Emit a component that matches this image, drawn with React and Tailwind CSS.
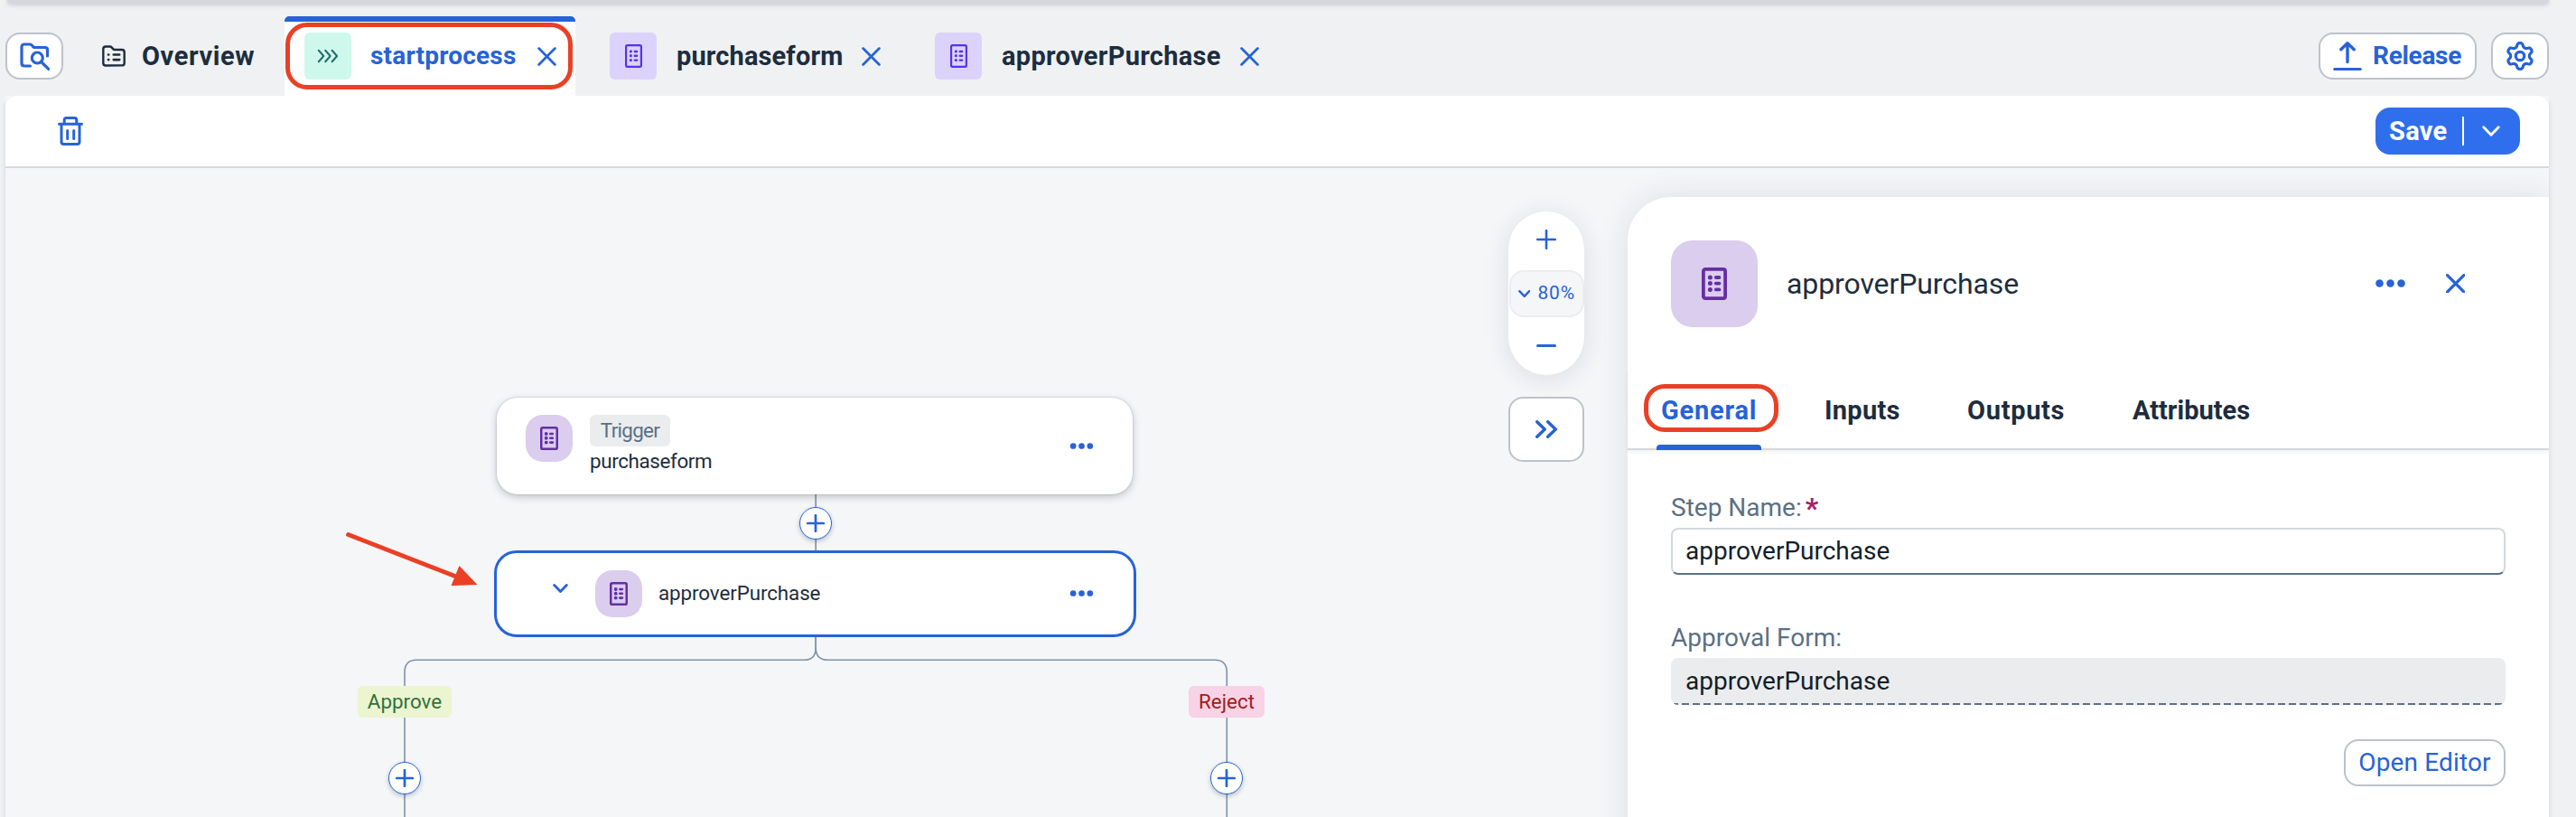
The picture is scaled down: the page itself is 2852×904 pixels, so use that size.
const GEAR_PATH = (() => {
  const points = [];
  for (let i = 0; i < 120; i++) {
    const a = (i / 120) * Math.PI * 2;
    const lobe = Math.tanh(1.6 * Math.cos(6 * a)) / Math.tanh(1.6);
    const r = 12.4 + 2 * lobe;
    points.push(`${(16 + r * Math.sin(a)).toFixed(2)} ${(16 - r * Math.cos(a)).toFixed(2)}`);
  }
  return `M${points.join("L")}Z`;
})();

function FormIcon({ className, stroke = 3.8, dot = 2.5, dash = 3.8 }) {
  return (
    <svg viewBox="0 0 28 36" preserveAspectRatio="none" className={className} fill="none" stroke="currentColor">
      <rect x={stroke / 2} y={stroke / 2} width={28 - stroke} height={36 - stroke} rx="2.2" strokeWidth={stroke} />
      {[11, 17.6, 24.4].map((y) => (
        <g key={y}>
          <circle cx="9.4" cy={y} r={dot} fill="currentColor" stroke="none" />
          <path d={`M15.8 ${y}h3.6`} strokeWidth={dash} strokeLinecap="round" />
        </g>
      ))}
    </svg>
  );
}

function CloseIcon({ className, width = 2.6 }) {
  return (
    <svg viewBox="0 0 20 20" className={className} fill="none" stroke="#2763d6" strokeWidth={width} strokeLinecap="round">
      <path d="M1.5 1.5l17 17M18.5 1.5l-17 17" />
    </svg>
  );
}

function FolderSearchIcon() {
  return (
    <svg viewBox="0 0 34 32" className="h-8 w-[34px]" fill="none" stroke="#2763d6" strokeWidth="3.2" strokeLinecap="round" strokeLinejoin="round">
      <path d="M12.5 27H6q-3 0-3-3V6q0-3 3-3h6q1.500 0 2.500 1.300l1.200 1.400Q16.600 6.500 18 6.500h11q2.500 0 2.500 2.500v7" />
      <circle cx="20.300" cy="18" r="6" />
      <path d="M24.700 22.500l8 7.800" />
    </svg>
  );
}

function OverviewIcon() {
  return (
    <svg viewBox="0 0 26 24" className="h-6 w-[26px]" fill="none" stroke="#1d2d3e" strokeWidth="2.4" strokeLinecap="round" strokeLinejoin="round">
      <path d="M4 22.500q-2.700 0-2.700-2.700V4.200q0-2.700 2.700-2.700h4.600q1.200 0 2 .9l1.500 1.700q.8.9 2 .9H22q2.700 0 2.700 2.700v12q0 2.700-2.700 2.700z" />
      <path d="M7 10.500h.2M12.800 10.500h6.400M7 16.100h.2M12.800 16.100h6.400" strokeWidth="2.700" />
    </svg>
  );
}

function ProcessIcon() {
  return (
    <svg viewBox="0 0 24 16" className="h-4 w-6" fill="none" stroke="#256f6f" strokeWidth="2.100" strokeLinecap="round" strokeLinejoin="round">
      <path d="M1.800 1.800L7.300 8l-5.500 6.200M9.200 1.800L14.700 8l-5.500 6.200M16.600 1.800L22.100 8l-5.500 6.200" />
    </svg>
  );
}

function TrashIcon() {
  return (
    <svg viewBox="0 0 28 32" className="h-8 w-7" fill="none" stroke="#2763d6" strokeWidth="3" strokeLinecap="round" strokeLinejoin="round">
      <path d="M1.500 8.200h25M7.200 8V4q0-2.400 2.400-2.400h8.800q2.400 0 2.400 2.400v4M4 8.200V28q0 2.500 2.500 2.500h15q2.500 0 2.500-2.500V8.200M10.700 15.500v9M17.700 15.500v9" />
    </svg>
  );
}

function ReleaseIcon() {
  return (
    <svg viewBox="0 0 32 32" className="h-8 w-8" fill="none" stroke="#2763d6" strokeLinecap="round" strokeLinejoin="round">
      <path d="M16 22.500V2.200M8.800 8.800L16 1.800l7.200 7" strokeWidth="3.400" />
      <path d="M1.700 30.400h28.600" strokeWidth="3" />
    </svg>
  );
}

function DotsIcon({ className }) {
  return (
    <svg viewBox="0 0 33 9" className={className} fill="#2763d6">
      <circle cx="4.500" cy="4.500" r="4.300" />
      <circle cx="16.500" cy="4.500" r="4.300" />
      <circle cx="28.500" cy="4.500" r="4.300" />
    </svg>
  );
}

function Chevron({ className, color = "#2763d6", width = 3 }) {
  return (
    <svg viewBox="0 0 20 12" className={className} fill="none" stroke={color} strokeWidth={width} strokeLinecap="round" strokeLinejoin="round">
      <path d="M1.800 1.800L10 10.200l8.200-8.400" />
    </svg>
  );
}

function FormTab({ label, width, textClass }) {
  return (
    <div className={`flex h-full items-center pl-[38px] pr-[22px] ${width}`}>
      <div className="flex size-[52px] items-center justify-center rounded-md bg-[#dcd3fc] text-[#5332f0]">
        <FormIcon className="h-[26px] w-[19px]" stroke={3.2} dot={2.2} dash={3.4} />
      </div>
      <span className={`ml-[22px] whitespace-nowrap text-[29px] font-bold leading-8 ${textClass}`}>{label}</span>
      <CloseIcon className="ml-auto size-[21px]" />
    </div>
  );
}

function StepIcon({ className = "" }) {
  return (
    <div className={`flex size-[52px] shrink-0 items-center justify-center rounded-[19px] bg-[#dbcdee] text-[#652fa3] ${className}`}>
      <FormIcon className="h-[26px] w-5" stroke={3.5} dot={2.7} dash={3.6} />
    </div>
  );
}

function AddStep({ className }) {
  return (
    <div className={`absolute flex size-9 items-center justify-center rounded-full border-[1.5px] border-[#2763d6] bg-white shadow-[0_2px_5px_rgba(34,53,72,0.28)] ${className}`}>
      <svg viewBox="0 0 20 20" className="size-5" stroke="#2763d6" strokeWidth="2.700" strokeLinecap="round">
        <path d="M10 1.200v17.600M1.200 10h17.600" />
      </svg>
    </div>
  );
}

function TabBar() {
  return (
    <header className="flex h-[88px] items-center pl-[6px] pr-[30px]">
      <button className="flex h-[52px] w-16 items-center justify-center rounded-[16px] border-2 border-[#bcc3ca] bg-white">
        <FolderSearchIcon />
      </button>
      <div className="ml-[43px] flex w-[202px] items-center">
        <OverviewIcon />
        <span className="ml-[18px] text-[29px] font-bold leading-8 tracking-[0.600px]">Overview</span>
      </div>
      <div className="relative flex h-full w-[322px] items-center bg-white pl-[22px] pr-[21px]">
        <div className="absolute inset-x-0 top-0 h-[6px] rounded-t-[5px] bg-[#2763d6]" />
        <div className="absolute bottom-[7px] left-[1px] right-[3px] top-[7px] rounded-[24px] border-[5px] border-[#ea4025]" />
        <div className="flex size-[52px] items-center justify-center rounded-md bg-[#cff8ec]">
          <ProcessIcon />
        </div>
        <span className="ml-[21px] whitespace-nowrap text-[28px] font-bold tracking-[0.2px] text-[#2763d6]">startprocess</span>
        <CloseIcon className="ml-auto size-[21px]" />
      </div>
      <FormTab label="purchaseform" width="w-[360px]" textClass="tracking-[0.130px]" />
      <FormTab label="approverPurchase" width="w-[419px]" textClass="tracking-[0.300px]" />
      <button className="ml-auto flex h-[52px] w-[175px] items-center rounded-[16px] border-2 border-[#bcc3ca] bg-white pl-[14px] text-[28px] font-bold tracking-[-0.3px] text-[#2763d6]">
        <ReleaseIcon />
        <span className="ml-[12px]">Release</span>
      </button>
      <button className="ml-4 flex h-[52px] w-16 items-center justify-center rounded-[16px] border-2 border-[#bcc3ca] bg-white">
        <svg viewBox="0 0 32 32" className="size-8" fill="none" stroke="#2763d6" strokeWidth="3.2" strokeLinejoin="round">
          <path d={GEAR_PATH} />
          <circle cx="16" cy="16" r="4.700" />
        </svg>
      </button>
    </header>
  );
}

function Toolbar() {
  return (
    <div className="flex h-20 items-center justify-between rounded-t-[14px] border-b-2 border-[#d6d8da] bg-white pl-[58px] pr-8">
      <TrashIcon />
      <button className="flex h-[52px] w-40 items-center rounded-[16px] bg-[#2f6fed] pl-[15px] text-[29px] font-bold leading-8 tracking-[0.300px] text-white">
        <span className="w-[81px] pb-px text-left">Save</span>
        <span className="h-8 w-[2px] bg-white" />
        <Chevron className="ml-5 h-3 w-5" color="#ffffff" width={2.8} />
      </button>
    </div>
  );
}

function FlowCanvas() {
  return (
    <div className="relative h-[718px] w-[1664px] shrink-0 text-[22.4px] leading-7">
      <svg viewBox="6 186 1664 718" className="absolute inset-0 h-full w-full" fill="none">
        <g stroke="#8092a6" strokeWidth="1.600">
          <path d="M903.200 546V612" />
          <path d="M903.200 704V717Q903.200 730.300 890 730.300H461Q448 730.300 448 744V904" />
          <path d="M903.200 704V717Q903.200 730.300 917 730.300H1345Q1358.300 730.300 1358.300 744V904" />
        </g>
        <path d="M385.500 591.500L505 638" stroke="#ea4025" strokeWidth="4.800" strokeLinecap="round" />
        <path d="M528.500 647L499.500 648L508.500 626Z" fill="#ea4025" />
      </svg>

      <div className="absolute left-[544px] top-[254px] flex h-[107px] w-[704px] items-start rounded-[23px] bg-white pl-8 pr-[43px] pt-[19px] shadow-[0_0_2px_rgba(34,53,72,0.3),0_3px_8px_rgba(34,53,72,0.25)]">
        <StepIcon />
        <div className="ml-[19px]">
          <div className="flex h-[35px] w-[89px] items-center justify-center rounded-md bg-[#eaecee] pb-[2px] tracking-[-0.7px] text-[#5b6f85]">Trigger</div>
          <div className="mt-[2px] leading-7 tracking-[-0.37px]">purchaseform</div>
        </div>
        <DotsIcon className="ml-auto mt-[31px] h-[7px] w-[27px]" />
      </div>

      <AddStep className="left-[878.500px] top-[375px]" />

      <div className="absolute left-[541px] top-[423px] flex h-[96px] w-[711px] items-center rounded-[25px] border-[3px] border-[#2763d6] bg-white pl-[62px] pr-[44px] pb-px">
        <Chevron className="-mt-[11px] h-[10px] w-[17px]" width={3.4} />
        <StepIcon className="ml-[30px]" />
        <span className="ml-[18px] pb-px tracking-[-0.1px]">approverPurchase</span>
        <DotsIcon className="ml-auto h-[7px] w-[27px]" />
      </div>

      <div className="absolute left-[390px] top-[573px] flex h-[35px] w-[104px] items-center justify-center rounded-md bg-[#ebf5cf] pb-px text-[#33703c]">Approve</div>
      <div className="absolute left-[1310px] top-[573px] flex h-[35px] w-[84px] items-center justify-center rounded-md bg-[#f8d2e7] pb-px text-[#a12018]">Reject</div>
      <AddStep className="left-[423.500px] top-[657px]" />
      <AddStep className="left-[1333.500px] top-[657px]" />
    </div>
  );
}

function ZoomControls() {
  return (
    <div className="mr-12 w-[84px] shrink-0 pt-12">
      <div className="flex h-[181px] flex-col items-center rounded-[42px] bg-white shadow-[0_4px_28px_rgba(34,53,72,0.12)]">
        <div className="flex h-[65px] items-center justify-center pb-[3px]">
          <svg viewBox="0 0 22 22" className="size-[22px]" stroke="#2763d6" strokeWidth="2.600" strokeLinecap="round">
            <path d="M11 1.200v19.600M1.200 11h19.600" />
          </svg>
        </div>
        <div className="flex h-[52px] w-[83px] items-center rounded-[16px] border-2 border-[#ebedee] bg-[#f4f6f8] pl-[8px] text-[21px] text-[#2763d6]">
          <Chevron className="h-[8px] w-[13.500px]" width={3.6} />
          <span className="ml-[8.500px] tracking-[0.800px]">80%</span>
        </div>
        <div className="mt-[30px] h-[2.500px] w-[22px] rounded-full bg-[#2763d6]" />
      </div>
      <button className="mt-6 flex h-[72px] w-[84px] items-center justify-center rounded-[16px] border-2 border-[#bcc3ca] bg-white">
        <svg viewBox="0 0 24 20" className="h-5 w-6" fill="none" stroke="#2763d6" strokeWidth="3.400" strokeLinecap="round" strokeLinejoin="round">
          <path d="M1.700 1.700L10.300 10l-8.600 8.300M13.700 1.700L22.300 10l-8.600 8.300" />
        </svg>
      </button>
    </div>
  );
}

function DetailsPanel() {
  return (
    <aside className="mt-8 h-[740px] w-[1020px] rounded-tl-[48px] bg-white shadow-[0_0_36px_rgba(34,53,72,0.11)]">
      <div className="flex h-48 items-center pl-12 pr-[93px]">
        <div className="flex size-24 items-center justify-center rounded-[24px] bg-[#dbcdee] text-[#652fa3]">
          <FormIcon className="h-9 w-7" />
        </div>
        <h2 className="ml-8 text-[32px] tracking-[-0.1px]">approverPurchase</h2>
        <DotsIcon className="mb-px ml-auto h-[9px] w-[33px]" />
        <CloseIcon className="mb-px ml-[45px] size-[21.500px]" width={3.1} />
      </div>

      <nav className="flex h-[88px] border-b-2 border-[#d6d8da] pl-8 text-[29px] font-bold leading-[34px] shadow-[0_2px_4px_rgba(34,53,72,0.07)]">
        <div className="relative w-[116px] pl-[5px] pt-[27px] tracking-[0.800px] text-[#2763d6]">
          General
          <div className="absolute -bottom-[2px] left-0 h-[6px] w-full rounded-t-[4px] bg-[#2763d6]" />
          <div className="absolute -left-[14px] top-[15px] h-[53px] w-[149px] rounded-[23px] border-[5px] border-[#ea4025]" />
        </div>
        <div className="w-[157px] pl-[70px] pt-[27px] tracking-[0.300px]">Inputs</div>
        <div className="ml-[71px] w-[183px] pt-[27px] tracking-[0.700px]">Outputs</div>
        <div className="pt-[27px]">Attributes</div>
      </nav>

      <div className="flex flex-col pl-12 pr-12 pt-[46px] text-[28px] leading-[36px]">
        <label className="flex h-10 items-center pb-[4px] text-[#5b6f85]">
          Step Name:<span className="ml-[4px] text-[32px] font-bold text-[#aa1c67]">*</span>
        </label>
        <div className="flex h-[52px] items-center rounded-[8px] border-2 border-b-[#5b6f85] border-l-[#d3d9de] border-r-[#d3d9de] border-t-[#d3d9de] bg-white pl-[14px] text-[#131e29]">approverPurchase</div>
        <label className="mt-[51px] flex h-10 items-center pb-[3px] text-[#5b6f85]">Approval Form:</label>
        <div className="mt-[1px] flex h-[52px] flex-col overflow-hidden rounded-[8px] bg-[#ebeced] text-[#131e29]">
          <div className="flex h-[50px] items-center pl-4 pt-px">approverPurchase</div>
          <div className="h-[2px] bg-[repeating-linear-gradient(90deg,#5b6f85_0,#5b6f85_8px,transparent_8px,transparent_12px)]" />
        </div>
        <button className="mt-[38px] flex h-[52px] w-[179px] items-center justify-center self-end whitespace-nowrap rounded-[16px] border-2 border-[#bcc1ca] bg-white tracking-[0.150px] text-[#2763d6]">
          Open Editor
        </button>
      </div>
    </aside>
  );
}

export default function App() {
  return (
    <div className="h-[904px] w-[2852px] overflow-hidden bg-[#eff1f3] font-['Roboto',sans-serif] text-[#1d2d3e]">
      <div className="mb-[14px] ml-2 mr-[30px] h-1 rounded-b-[14px] bg-[#d5d7db] shadow-[0_1px_5px_rgba(34,53,72,0.25)]" />
      <TabBar />
      <div className="ml-[6px] w-[2816px] bg-[#f4f6f8] shadow-[0_8px_5px_rgba(34,53,72,0.15)]">
        <Toolbar />
        <main className="flex h-[718px] overflow-hidden">
          <FlowCanvas />
          <ZoomControls />
          <DetailsPanel />
        </main>
      </div>
    </div>
  );
}
